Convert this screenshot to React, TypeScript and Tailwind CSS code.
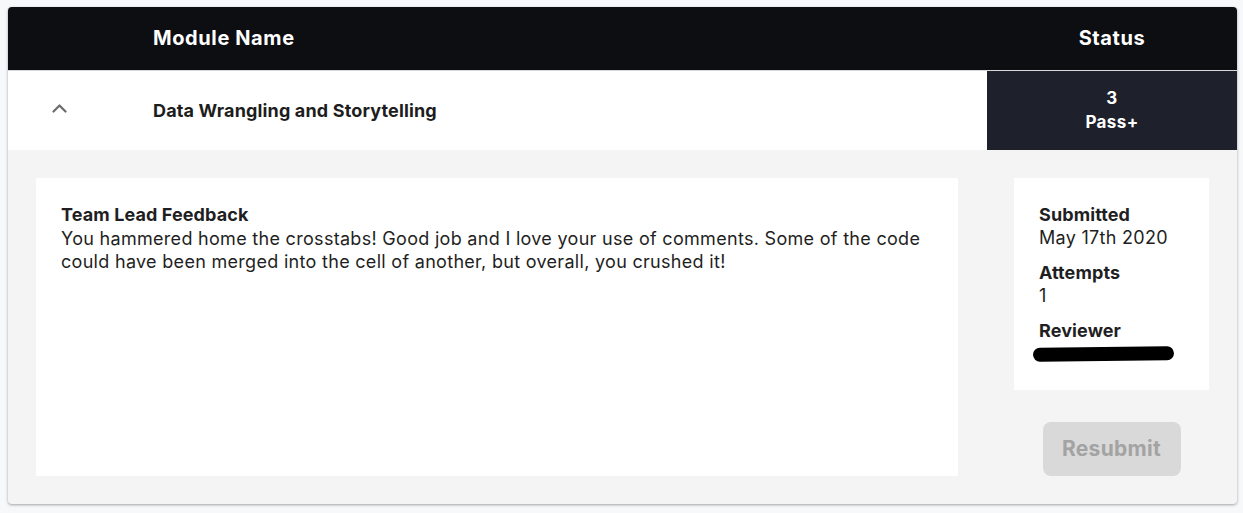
import React from "react";

export default function App() {
  return (
    <div
      className="min-h-[513px] w-full bg-[#f7f8fa] pt-[7px] px-[6px]"
      style={{ fontFamily: "Inter, 'Noto Sans', sans-serif" }}
    >
      <div className="mx-[2px] w-[1229px] rounded-[4px] overflow-hidden bg-[#f4f4f4] shadow-[0_1px_3px_rgba(0,0,0,0.35)]">
        {/* Header */}
        <div className="flex h-[63px] items-center bg-[#0d0e12] text-white">
          <div className="w-[145px]" />
          <div className="-mt-[2px] flex-1 text-[20px] font-bold tracking-[0.6px]">Module Name</div>
          <div className="-mt-[2px] w-[250px] text-center text-[20px] font-bold tracking-[0.6px]">Status</div>
        </div>
        <div className="h-px bg-[#d8d8dc]" />
        {/* Row */}
        <div className="flex h-[79px] bg-white">
          <div className="flex w-[145px] items-center">
            <svg
              width="15"
              height="9"
              viewBox="0 0 15 9"
              className="ml-[44px] -mt-[4px]"
              fill="none"
              stroke="#6b6b6b"
              strokeWidth="2.2"
              strokeLinecap="round"
              strokeLinejoin="round"
            >
              <path d="M1.5 7.5L7.5 1.5L13.5 7.5" />
            </svg>
          </div>
          <div className="flex flex-1 items-center text-[18px] font-bold text-[#1d1d20] tracking-[0.15px]">
            Data Wrangling and Storytelling
          </div>
          <div className="flex w-[250px] flex-col items-center justify-center bg-[#1e212b] pb-[2px] text-[17px] font-bold leading-[24px] tracking-[0.4px] text-white">
            <span>3</span>
            <span>Pass+</span>
          </div>
        </div>
        {/* Expanded */}
        <div className="flex gap-[56px] p-[28px]">
          <div className="h-[298px] w-[922px] bg-white px-[25px] pt-[25px] text-[18px] leading-[23.5px] tracking-[0.3px] text-[#1f1f23]">
            <div className="font-bold tracking-[0.1px]">Team Lead Feedback</div>
            <div>
              You hammered home the crosstabs! Good job and I love your use of comments. Some of the code could have been merged into the cell of another, but overall, you crushed it!
            </div>
          </div>
          <div className="flex w-[195px] flex-col items-center">
            <div className="h-[212px] w-full bg-white px-[25px] pt-[25px] text-[18px] leading-[23px] tracking-[0.3px] text-[#1f1f23]">
              <div className="font-bold tracking-[0.1px]">Submitted</div>
              <div>May 17th 2020</div>
              <div className="mt-[12px] font-bold tracking-[0.1px]">Attempts</div>
              <div>1</div>
              <div className="mt-[12px] font-bold tracking-[0.1px]">Reviewer</div>
              <div className="mt-[5px] h-[14px] w-[141px] -ml-[6px] rounded-full bg-black -rotate-[0.6deg]" />
            </div>
            <button className="mt-[32px] h-[54px] w-[138px] rounded-[8px] bg-[#d9d9d9] text-[21px] font-bold tracking-[0.3px] text-[#a3a3a3]">
              Resubmit
            </button>
          </div>
        </div>
      </div>
    </div>
  );
}
